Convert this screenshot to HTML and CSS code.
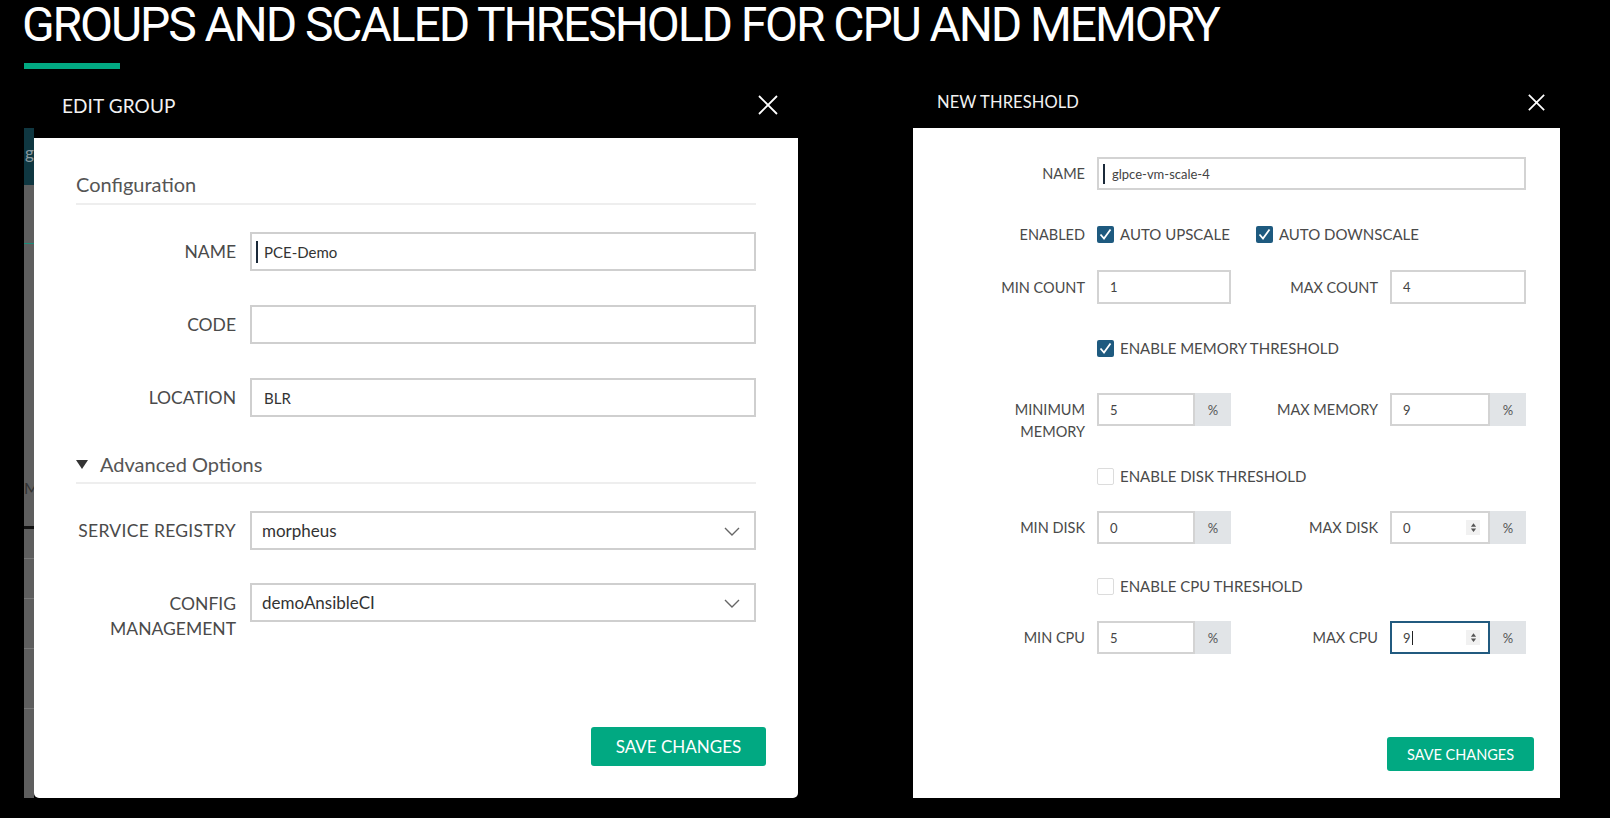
FILE: index.html
```html
<!DOCTYPE html>
<html lang="en">
<head>
<meta charset="utf-8">
<title>Groups and scaled threshold</title>
<link rel="stylesheet" href="styles.css">
</head>
<body>
<h1 class="slide-title">GROUPS AND SCALED THRESHOLD FOR CPU AND MEMORY</h1>
<div class="accent"></div>

<div class="shots">
  <!-- Left screenshot: Edit Group -->
  <section class="shot shot-left">
    <div class="bg-strip">
      <div class="strip-top"><span>g</span></div>
      <div class="strip-line teal"></div>
      <div class="strip-letter">M</div>
      <div class="strip-line dark"></div>
      <div class="strip-line faint l1"></div>
      <div class="strip-line faint l2"></div>
      <div class="strip-line faint l3"></div>
      <div class="strip-line faint l4"></div>
    </div>
    <div class="modal modal-left">
      <header class="modal-head head-left">
        <span class="head-title">EDIT GROUP</span>
        <svg class="close big" viewBox="0 0 20 20"><path d="M1 1 L19 19 M19 1 L1 19" /></svg>
      </header>
      <div class="modal-body body-left">
        <div class="form-left">
          <div class="section-title">Configuration</div>
          <div class="lrow first">
            <label class="llabel">NAME</label>
            <div class="linput"><span class="caret"></span>PCE-Demo</div>
          </div>
          <div class="lrow">
            <label class="llabel">CODE</label>
            <div class="linput"></div>
          </div>
          <div class="lrow">
            <label class="llabel">LOCATION</label>
            <div class="linput">BLR</div>
          </div>
          <div class="section-title adv"><span class="tri"></span>Advanced Options</div>
          <div class="lrow first">
            <label class="llabel wide">SERVICE REGISTRY</label>
            <div class="linput select">morpheus
              <svg class="chev" viewBox="0 0 16 9"><path d="M1 1 L8 8 L15 1" /></svg>
            </div>
          </div>
          <div class="lrow top">
            <label class="llabel two">CONFIG<br>MANAGEMENT</label>
            <div class="linput select">demoAnsibleCI
              <svg class="chev" viewBox="0 0 16 9"><path d="M1 1 L8 8 L15 1" /></svg>
            </div>
          </div>
        </div>
        <div class="footer-left">
          <button class="btn btn-big">SAVE CHANGES</button>
        </div>
      </div>
    </div>
  </section>

  <!-- Right screenshot: New Threshold -->
  <section class="shot shot-right">
    <header class="modal-head head-right">
      <span class="head-title small">NEW THRESHOLD</span>
      <svg class="close small" viewBox="0 0 20 20"><path d="M1 1 L19 19 M19 1 L1 19" /></svg>
    </header>
    <div class="modal-body body-right">
      <div class="trow r-name">
        <label class="tlabel">NAME</label>
        <div class="tinput wide"><span class="caret small"></span>glpce-vm-scale-4</div>
      </div>
      <div class="trow r-enabled">
        <label class="tlabel">ENABLED</label>
        <div class="checks">
          <span class="check on"><svg viewBox="0 0 17 17"><path d="M3.5 8.5 L7 12.5 L13.5 3.5" /></svg></span>
          <span class="ctext">AUTO UPSCALE</span>
          <span class="check on gap"><svg viewBox="0 0 17 17"><path d="M3.5 8.5 L7 12.5 L13.5 3.5" /></svg></span>
          <span class="ctext">AUTO DOWNSCALE</span>
        </div>
      </div>
      <div class="trow r-count">
        <label class="tlabel">MIN COUNT</label>
        <div class="tinput">1</div>
        <label class="tlabel">MAX COUNT</label>
        <div class="tinput">4</div>
      </div>
      <div class="trow r-check">
        <span></span>
        <div class="checks">
          <span class="check on"><svg viewBox="0 0 17 17"><path d="M3.5 8.5 L7 12.5 L13.5 3.5" /></svg></span>
          <span class="ctext">ENABLE MEMORY THRESHOLD</span>
        </div>
      </div>
      <div class="trow r-pct r-mem">
        <label class="tlabel two">MINIMUM<br>MEMORY</label>
        <div class="group"><div class="tinput">5</div><span class="addon">%</span></div>
        <label class="tlabel first-line">MAX MEMORY</label>
        <div class="group"><div class="tinput">9</div><span class="addon">%</span></div>
      </div>
      <div class="trow r-check r-disk">
        <span></span>
        <div class="checks">
          <span class="check off"></span>
          <span class="ctext">ENABLE DISK THRESHOLD</span>
        </div>
      </div>
      <div class="trow r-pct">
        <label class="tlabel">MIN DISK</label>
        <div class="group"><div class="tinput">0</div><span class="addon">%</span></div>
        <label class="tlabel">MAX DISK</label>
        <div class="group"><div class="tinput">0<span class="spin"><svg viewBox="0 0 8 12"><path d="M4 1 L7 5 L1 5 Z M4 11 L7 7 L1 7 Z" /></svg></span></div><span class="addon">%</span></div>
      </div>
      <div class="trow r-check r-cpu">
        <span></span>
        <div class="checks">
          <span class="check off"></span>
          <span class="ctext">ENABLE CPU THRESHOLD</span>
        </div>
      </div>
      <div class="trow r-pct">
        <label class="tlabel">MIN CPU</label>
        <div class="group"><div class="tinput">5</div><span class="addon">%</span></div>
        <label class="tlabel">MAX CPU</label>
        <div class="group"><div class="tinput focus">9<span class="caret tiny"></span><span class="spin"><svg viewBox="0 0 8 12"><path d="M4 1 L7 5 L1 5 Z M4 11 L7 7 L1 7 Z" /></svg></span></div><span class="addon">%</span></div>
      </div>
      <div class="footer-right">
        <button class="btn btn-small">SAVE CHANGES</button>
      </div>
    </div>
  </section>
</div>
</body>
</html>
```

FILE: styles.css
```css
* { box-sizing: border-box; }

html, body {
  margin: 0;
  padding: 0;
  background: #000;
  width: 1610px;
  height: 818px;
  overflow: hidden;
}

body {
  font-family: Lato, "Open Sans", sans-serif;
  color: #555;
}

.slide-title {
  margin: 0;
  padding: 3px 0 0 22px;
  height: 46px;
  font-family: Roboto, "Open Sans", sans-serif;
  font-weight: 400;
  font-size: 48px;
  line-height: 43px;
  letter-spacing: -2.1px;
  color: #fff;
  white-space: nowrap;
}

.accent {
  margin: 17px 0 0 24px;
  width: 96px;
  height: 6px;
  background: #01a982;
}

.shots {
  display: flex;
  margin-top: 11px;
  height: 718px;
}

/* ---------- left shot ---------- */
.shot-left {
  display: flex;
  margin-left: 24px;
  width: 774px;
}

.bg-strip {
  position: relative;
  width: 10px;
  margin-top: 48px;
  background: #5e5e5e;
  overflow: hidden;
}
.strip-top {
  height: 57px;
  background: #0f3741;
  color: #8a9aa0;
  font-size: 17px;
  padding-top: 14px;
  padding-left: 1px;
  white-space: nowrap;
}
.strip-line { position: absolute; left: 0; right: 0; height: 1px; }
.strip-line.teal { top: 115px; background: #1a8d7a; }
.strip-line.dark { top: 398px; height: 3px; background: #111; }
.strip-line.faint { background: #777; }
.strip-line.l1 { top: 430px; }
.strip-line.l2 { top: 470px; }
.strip-line.l3 { top: 520px; }
.strip-line.l4 { top: 580px; }
.strip-letter {
  position: absolute;
  top: 350px;
  left: 0;
  color: #333;
  font-size: 16px;
  white-space: nowrap;
}

.modal-left {
  flex: 1;
  display: flex;
  flex-direction: column;
}

.modal-head {
  display: flex;
  align-items: center;
  justify-content: space-between;
  color: #f2f2f2;
}
.head-left {
  height: 58px;
  padding: 0 20px 8px 28px;
}
.head-title {
  font-size: 19px;
  letter-spacing: 0.1px;
}
.head-title.small { font-size: 16.5px; }

.close {
  width: 20px;
  height: 20px;
  stroke: #fff;
  stroke-width: 1.8;
  fill: none;
}
.close.small { width: 17px; height: 17px; stroke-width: 2; }

.modal-body {
  background: #fff;
  flex: 1;
  display: flex;
  flex-direction: column;
}
.body-left { border-radius: 0 0 5px 5px; }

.form-left { padding: 0 42px; }

.section-title {
  margin-top: 33px;
  font-size: 20px;
  line-height: 26px;
  padding-bottom: 6px;
  border-bottom: 2px solid #eeeeee;
  color: #555;
}
.section-title.adv {
  margin-top: 34px;
  padding-bottom: 5px;
  display: flex;
  align-items: center;
  padding-left: 0;
}
.tri {
  width: 0;
  height: 0;
  border-left: 6px solid transparent;
  border-right: 6px solid transparent;
  border-top: 9px solid #333;
  margin: 0 12px 0 0;
}

.lrow {
  display: grid;
  grid-template-columns: 160px 1fr;
  column-gap: 14px;
  align-items: center;
  margin-top: 34px;
}
.lrow.first { margin-top: 27px; }
.lrow.top { margin-top: 33px; align-items: start; }

.llabel {
  text-align: right;
  font-size: 17.5px;
  color: #4a4a4a;
  white-space: nowrap;
}
.llabel.wide { letter-spacing: 0.3px; }
.llabel.two { line-height: 25px; padding-top: 8px; }

.linput {
  position: relative;
  height: 39px;
  border: 2px solid #cfcfcf;
  display: flex;
  align-items: center;
  padding-left: 12px;
  font-size: 15px;
  color: #333;
}
.linput.select {
  font-size: 17px;
  padding-left: 10px;
}
.caret {
  display: inline-block;
  width: 2px;
  height: 22px;
  background: #1b2a3a;
  margin: 0 6px 0 -8px;
}
.chev {
  position: absolute;
  right: 14px;
  top: 14px;
  width: 16px;
  height: 9px;
  stroke: #666;
  stroke-width: 1.4;
  fill: none;
}

.footer-left {
  margin-top: auto;
  display: flex;
  justify-content: flex-end;
  padding: 0 32px 32px 0;
}

.btn {
  border: 0;
  background: #01a982;
  color: #fff;
  font-family: Lato, sans-serif;
  border-radius: 3px;
  cursor: pointer;
}
.btn-big {
  width: 175px;
  height: 39px;
  font-size: 17px;
}
.btn-small {
  width: 147px;
  height: 34px;
  font-size: 14.5px;
}

/* ---------- right shot ---------- */
.shot-right {
  margin-left: 115px;
  width: 647px;
  display: flex;
  flex-direction: column;
}
.head-right {
  height: 48px;
  padding: 0 15px 4px 24px;
}

.body-right {
  padding: 29px 34px 27px 20px;
}

.trow {
  display: grid;
  grid-template-columns: 152px 134px 1fr 136px;
  column-gap: 12px;
  align-items: center;
}
.tlabel {
  text-align: right;
  font-size: 14.5px;
  color: #4a4a4a;
  white-space: nowrap;
}
.tlabel.two { line-height: 22px; padding-top: 6px; }
.tlabel.first-line { line-height: 22px; padding-top: 6px; }

.tinput {
  position: relative;
  height: 33px;
  border: 2px solid #d3d3d3;
  display: flex;
  align-items: center;
  padding-left: 11px;
  font-size: 13px;
  color: #444;
  background: #fff;
}
.tinput.wide { grid-column: 2 / 5; padding-left: 4px; }
.tinput.focus { border-color: #215a7f; }
.caret.small { height: 20px; margin: 0 7px 0 0; }
.caret.tiny { height: 14px; width: 1px; margin: 0 0 0 1px; background: #222; }

.checks {
  grid-column: 2 / 5;
  display: flex;
  align-items: center;
  height: 22px;
}
.check {
  width: 17px;
  height: 17px;
  border-radius: 2px;
  display: inline-flex;
}
.check.on { background: #1e5a7f; }
.check.on svg {
  width: 17px;
  height: 17px;
  stroke: #fff;
  stroke-width: 1.8;
  fill: none;
}
.check.off { border: 1px solid #dcdcdc; background: #fff; }
.check.gap { margin-left: 26px; }
.ctext {
  margin-left: 6px;
  font-size: 15px;
  color: #4a4a4a;
}

.r-enabled { margin-top: 33px; }
.r-count { margin-top: 25px; }
.r-check { margin-top: 33px; }
.r-pct { margin-top: 24px; }
.r-mem { margin-top: 34px; align-items: start; }
.r-disk { margin-top: 22px; }
.r-cpu { margin-top: 31px; }
.r-count .tinput { height: 34px; }

.group {
  display: flex;
  height: 33px;
}
.group .tinput {
  flex: 1;
  height: 33px;
}
.addon {
  width: 36px;
  background: #e1e4e7;
  display: flex;
  align-items: center;
  justify-content: center;
  font-size: 13px;
  color: #555;
}

.spin {
  position: absolute;
  right: 8px;
  top: 7px;
  width: 14px;
  height: 15px;
  background: #f1f1f1;
  display: flex;
  align-items: center;
  justify-content: center;
}
.spin svg { width: 7px; height: 11px; fill: #555; }

.footer-right {
  margin-top: auto;
  display: flex;
  justify-content: flex-end;
  margin-right: -8px;
}
```
